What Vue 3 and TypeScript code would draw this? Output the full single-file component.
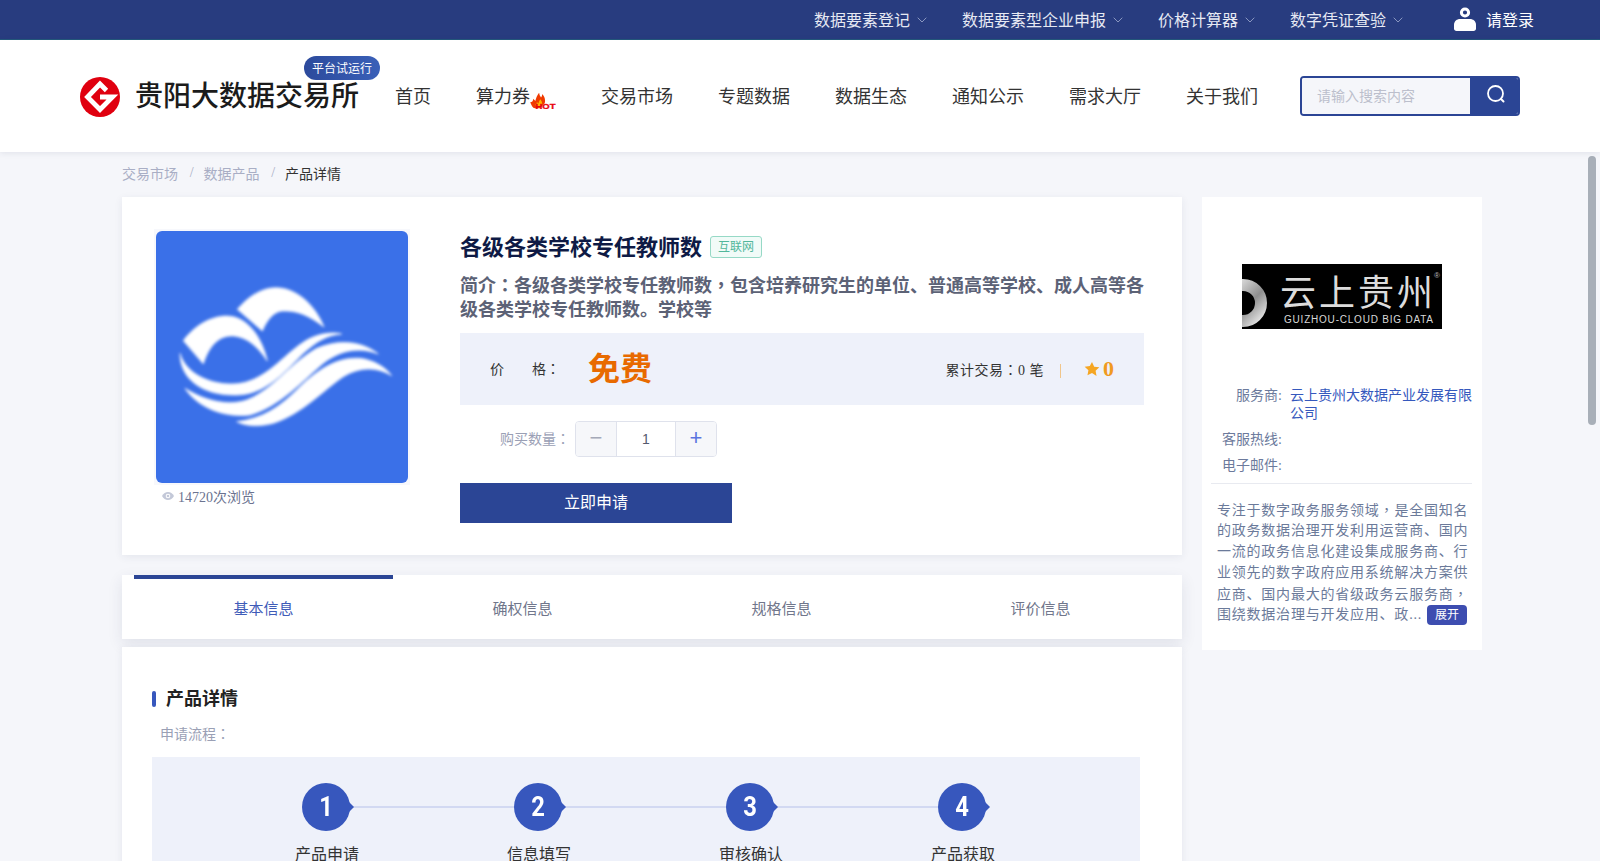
<script setup lang="ts">
const topLinks: string[] = ['数据要素登记', '数据要素型企业申报', '价格计算器', '数字凭证查验']
const tabs: string[] = ['基本信息', '确权信息', '规格信息', '评价信息']
const steps: string[] = ['产品申请', '信息填写', '审核确认', '产品获取']
</script>

<template>
  <div class="page">
    <div class="topbar">
      <div v-for="t in topLinks" :key="t" class="top-link">
        <span>{{ t }}</span>
        <svg class="chev" viewBox="0 0 10 6"><path d="M.7.7 5 5 9.3.7" fill="none" stroke="#8a97c0" stroke-width="1" /></svg>
      </div>
      <div class="login">
        <svg class="user" viewBox="0 0 22 24">
          <circle cx="11" cy="5.500" r="3.600" fill="none" stroke="#fff" stroke-width="3" />
          <path d="M0 18c0-4 3-6 6-6h10c3 0 6 2 6 6v3.500c0 1.500-1 2.500-2.500 2.500h-17C1 24 0 23 0 21.500z" fill="#fff" />
        </svg>
        <span>请登录</span>
      </div>
    </div>

    <header class="header">
      <div class="brand">
        <svg class="logo" viewBox="0 0 40 40">
          <circle cx="20" cy="20" r="20" fill="#e0000f" />
          <path d="M26.500 13.500 20 7 7.500 20 20 32.500 32.500 20H20" fill="none" stroke="#fff" stroke-width="4.800" />
        </svg>
        <span class="brand-name">贵阳大数据交易所</span>
        <span class="pill">平台试运行</span>
      </div>
      <nav class="nav">
        <a>首页</a>
        <a class="hot-link">算力券
          <svg class="hot" viewBox="0 0 27 16">
            <g transform="translate(0 -1.500) scale(1.200)">
              <path d="M1 9c1.500 0 2.500-1 2.500-3 .8 1 1.500 1 1.700 2C6 6 6 4 8.500 1c0 2 1 3 1.500 4 .8-1 1-2 1-3 2 2 3 5 2 8l-4 4H5C3 14 2 11 1 9z" fill="#f03a00" />
              <path d="M5 11c1 0 1.500-1 1.500-2 .8 0 1 1 1.500 1 0-1 .7-2.500 1.500-3.500 1 1.500 1.500 2.500 1.500 4.500l-2 2H7z" fill="#ffb400" />
            </g>
            <text x="6.500" y="15.500" class="hot-text" textLength="20" lengthAdjust="spacingAndGlyphs">HOT</text>
          </svg>
        </a>
        <a>交易市场</a>
        <a>专题数据</a>
        <a>数据生态</a>
        <a>通知公示</a>
        <a>需求大厅</a>
        <a>关于我们</a>
      </nav>
      <div class="search">
        <div class="search-input">请输入搜索内容</div>
        <div class="search-btn">
          <svg viewBox="0 0 20 20"><circle cx="9.500" cy="9.500" r="7.500" fill="none" stroke="#fff" stroke-width="1.800" /><path d="M15 15l2.500 2.500" stroke="#fff" stroke-width="2" stroke-linecap="round" /></svg>
        </div>
      </div>
    </header>

    <main class="content">
      <div class="crumbs">
        <span>交易市场</span><i>/</i><span>数据产品</span><i>/</i><b>产品详情</b>
      </div>
      <div class="columns">
        <div class="left">
          <section class="card product">
            <div class="pic-col">
              <div class="pic">
                <svg viewBox="78 63 756 756">
                  <defs><filter id="soft" x="-10%" y="-10%" width="120%" height="120%"><feGaussianBlur stdDeviation="5" /></filter></defs>
                  <rect x="78" y="63" width="756" height="756" fill="#3a70e8" />
                  <g fill="#fff" stroke="#fff" stroke-width="2" stroke-linejoin="round" filter="url(#soft)">
                    <path d="M160 392C190 350 240 318 290 318c60 0 105 60 122 135-30-45-60-70-100-75-45-4-75 30-92 84z" />
                    <path d="M322 298c30-35 70-65 115-65 65 0 120 55 145 118-45-35-80-50-125-48-25 2-45 25-60 60z" />
                    <path d="M150 430C170 500 260 530 330 520 420 505 470 420 540 385 570 370 610 365 635 372 590 375 560 395 520 430 460 490 400 560 310 555 220 555 150 510 150 430z" />
                    <path d="M165 535C220 570 290 590 350 570 430 540 480 460 560 415 630 385 700 395 745 432 690 410 630 420 580 460 520 510 450 590 360 615 280 625 200 590 165 535z" />
                    <path d="M320 635C400 625 450 590 500 540 560 480 620 440 690 445 730 450 765 470 785 497 740 470 690 470 640 500 580 540 520 610 430 640 390 650 350 650 320 635z" />
                  </g>
                </svg>
              </div>
              <div class="views">
                <svg viewBox="0 0 12 8"><path d="M0 4c1.500-2.500 3.500-4 6-4s4.500 1.500 6 4c-1.500 2.500-3.500 4-6 4S1.500 6.500 0 4z" fill="#c3c8d8" /><circle cx="6" cy="4" r="2.300" fill="#fff" /><circle cx="6" cy="4" r="1.300" fill="#c3c8d8" /></svg>
                <span>14720次浏览</span>
              </div>
            </div>
            <div class="info">
              <div class="title-row">
                <h1>各级各类学校专任教师数</h1>
                <span class="tag">互联网</span>
              </div>
              <p class="intro">简介<span class="pn">：</span>各级各类学校专任教师数<span class="pn">，</span>包含培养研究生的单位、普通高等学校、成人高等各级各类学校专任教师数。学校等</p>
              <div class="price">
                <span class="price-label">价</span>
                <span class="price-label second">格<span class="pn">：</span></span>
                <span class="free">免费</span>
                <span class="trade">累计交易<span class="pn">：</span>0 笔</span>
                <span class="sep"></span>
                <svg class="star" viewBox="0 0 24 24"><path d="M12 1.500l3.300 7 7.700 1-5.600 5.300 1.400 7.700L12 18l-6.800 3.500 1.400-7.700L1 8.500l7.700-1z" fill="#f5a623" /></svg>
                <span class="score">0</span>
              </div>
              <div class="qty">
                <span class="qty-label">购买数量<span class="pn">：</span></span>
                <div class="stepper">
                  <span class="step-btn minus">−</span>
                  <span class="step-val">1</span>
                  <span class="step-btn plus">+</span>
                </div>
              </div>
              <button class="apply">立即申请</button>
            </div>
          </section>

          <section class="card tabs">
            <div v-for="(t, i) in tabs" :key="t" class="tab" :class="{ active: i === 0 }">{{ t }}</div>
          </section>

          <section class="card detail">
            <h2>产品详情</h2>
            <div class="flow-label">申请流程<span class="pn">：</span></div>
            <div class="flow">
              <div v-for="(s, i) in steps" :key="s" class="flow-step" :class="{ last: i === steps.length - 1 }">
                <div class="num"><span class="digit">{{ i + 1 }}</span></div>
                <div class="step-name">{{ s }}</div>
              </div>
            </div>
          </section>
        </div>

        <aside class="side">
          <svg class="cloud" viewBox="0 0 200 65">
            <defs><linearGradient id="silver" x1="0" y1="0" x2="1" y2="1"><stop offset="0" stop-color="#f4f4f4" /><stop offset=".6" stop-color="#8e8e8e" /><stop offset="1" stop-color="#e6e6e6" /></linearGradient></defs>
            <rect width="200" height="65" fill="#000" />
            <circle cx="1" cy="39" r="18" fill="none" stroke="url(#silver)" stroke-width="12" />
            <text x="38" y="42" class="cloud-cn">云上贵州</text>
            <text x="42" y="59" class="cloud-en" textLength="149">GUIZHOU-CLOUD BIG DATA</text>
            <text x="192" y="14" class="cloud-r">®</text>
          </svg>
          <div class="meta first"><span class="meta-k">服务商:</span><span class="meta-v">云上贵州大数据产业发展有限公司</span></div>
          <div class="meta"><span class="meta-k">客服热线:</span></div>
          <div class="meta"><span class="meta-k">电子邮件:</span></div>
          <div class="rule"></div>
          <div class="desc">
            <div>专注于数字政务服务领域<span class="pn">，</span>是全国知名</div>
            <div>的政务数据治理开发利用运营商、国内</div>
            <div>一流的政务信息化建设集成服务商、行</div>
            <div>业领先的数字政府应用系统解决方案供</div>
            <div>应商、国内最大的省级政务云服务商<span class="pn">，</span></div>
            <div class="desc-last"><span>围绕数据治理与开发应用、政...</span><span class="more">展开</span></div>
          </div>
        </aside>
      </div>
    </main>

    <div class="thumb"></div>
  </div>
</template>

<style>
html, body { margin: 0; overflow: hidden; background: #f5f6fa; }
</style>

<style scoped>
.page {
  position: relative;
  height: 861px;
  overflow: hidden;
  background: #f5f6fa;
  font-family: "Liberation Serif", "Noto Sans CJK SC", serif;
  color: #333;
}
.pn { font-family: "Noto Sans CJK TC", sans-serif; }
.topbar {
  height: 37px;
  padding-bottom: 2px;
  border-bottom: 1px solid #24597c;
  background: #283c7f;
  display: flex;
  align-items: center;
  justify-content: flex-end;
  padding-right: 66px;
  color: #e6e9f3;
  font-size: 16px;
}
.top-link { display: flex; align-items: center; margin-right: 35px; }
.top-link:nth-child(4) { margin-right: 51px; }
.chev { width: 10px; height: 6px; margin: 2px 0 0 7px; }
.login { display: flex; align-items: center; color: #fff; }
.user { width: 22px; height: 24px; margin-right: 10px; }
.header {
  position: relative;
  z-index: 1;
  height: 112px;
  background: #fff;
  box-shadow: 0 1px 6px rgba(40, 50, 90, .1);
  display: flex;
  align-items: center;
  padding-left: 80px;
}
.brand { position: relative; display: flex; align-items: center; }
.logo { width: 40px; height: 40px; margin-top: 2px; }
.brand-name {
  margin-left: 15px;
  padding-top: 2px;
  font-family: "Liberation Sans", "Noto Sans CJK SC", sans-serif;
  font-size: 28px;
  font-weight: 500;
  color: #1b1b1b;
  line-height: 40px;
}
.pill {
  position: absolute;
  left: 224px;
  top: -19px;
  width: 76px;
  height: 24px;
  border-radius: 12px;
  background: linear-gradient(90deg, #2c4a9c, #3a60b8);
  color: #fff;
  font-size: 12px;
  line-height: 27px;
  text-align: center;
}
.nav { display: flex; margin-left: 36px; font-size: 18px; color: #333; gap: 45px; padding-bottom: 2px; }
.hot-link { display: flex; align-items: center; }
.hot { width: 27px; height: 16px; margin-top: 11px; margin-left: -1px; }
.hot-text { font: 900 8px "Liberation Sans", sans-serif; fill: #e8000b; stroke: #e8000b; stroke-width: .3px; }
.search {
  margin-left: 42px;
  width: 220px;
  height: 40px;
  box-sizing: border-box;
  border: 2px solid #2b4595;
  border-radius: 4px;
  display: flex;
  overflow: hidden;
}
.search-input {
  flex: 1;
  background: #f5f6fa;
  padding-left: 15px;
  color: #bcbfcc;
  font-size: 14px;
  line-height: 38px;
}
.search-btn { width: 48px; background: #2b4595; display: flex; align-items: center; justify-content: center; padding: 0 0 4px 3px; box-sizing: border-box; }
.search-btn svg { width: 20px; height: 20px; }

.content { padding-left: 122px; }
.crumbs { height: 45px; padding-bottom: 3px; box-sizing: border-box; display: flex; align-items: center; font-size: 14px; color: #a9aec5; }
.crumbs i { font-style: normal; width: 25.500px; text-align: center; text-indent: 2px; color: #a9aec5; }
.crumbs b { font-weight: 400; color: #333; }
.columns { display: flex; align-items: flex-start; gap: 20px; }
.left { width: 1060px; }
.card { background: #fff; box-shadow: 0 2px 8px rgba(40, 50, 90, .08); }
.product { display: flex; padding: 32px; box-sizing: border-box; height: 358px; }
.pic-col { width: 256px; margin-right: 50px; }
.pic { width: 256px; height: 256px; box-sizing: border-box; padding: 2px; background: #f7f8fc; }
.pic svg { display: block; width: 252px; height: 252px; border-radius: 6px; }
.views { display: flex; align-items: center; height: 22px; padding-left: 8px; font-size: 14px; color: #6b7390; }
.views svg { width: 12px; height: 8px; margin-right: 4px; }
.info { width: 684px; }
.title-row { display: flex; align-items: center; height: 36px; }
h1 { margin: -4px 0 0; font-size: 22px; font-weight: 700; color: #0e1a45; }
.tag {
  margin-left: 8px;
  width: 52px;
  height: 22px;
  box-sizing: border-box;
  border: 1px solid #96d9c6;
  border-radius: 3px;
  background: #f1fbf8;
  color: #52b79b;
  font-size: 12px;
  line-height: 20px;
  text-align: center;
}
.intro { margin: 7px 0 0; height: 49px; font-size: 18px; line-height: 24px; font-weight: 700; color: #5c6276; }
.price {
  margin-top: 12px;
  height: 72px;
  background: #eef1fa;
  display: flex;
  align-items: center;
  padding-left: 30px;
  font-size: 14px;
  color: #333;
}
.price-label { padding-bottom: 2px; }
.price-label.second { margin-left: 28px; }
.free { margin-left: 28px; padding-bottom: 6px; font-size: 32px; font-weight: 700; color: #e86a00; }
.trade { margin-left: auto; letter-spacing: .5px; }
.sep { width: 1px; height: 14px; background: #f0c58a; margin: 4px 23px 0 16px; }
.star { width: 16px; height: 16px; margin-right: 3px; }
.score { font-size: 22px; font-weight: 700; color: #f09a20; margin-right: 30px; line-height: 22px; }
.qty { margin-top: 16px; display: flex; align-items: center; padding-left: 40px; }
.qty-label { width: 75px; padding-bottom: 2px; font-size: 14px; color: #9aa0b5; }
.stepper {
  width: 142px;
  height: 36px;
  box-sizing: border-box;
  border: 1px solid #dfe2ec;
  border-radius: 4px;
  display: flex;
  overflow: hidden;
}
.step-btn {
  width: 40px;
  background: #f6f7fa;
  text-align: center;
  font-family: "Liberation Sans", sans-serif;
  font-size: 22px;
  line-height: 31px;
}
.minus { color: #a5a9b8; border-right: 1px solid #dfe2ec; }
.plus { color: #5b74e0; border-left: 1px solid #dfe2ec; }
.step-val { flex: 1; text-align: center; font-family: "Liberation Sans", sans-serif; font-size: 14px; line-height: 34px; color: #555a6e; }
.apply {
  display: block;
  margin-top: 26px;
  padding: 0 0 4px;
  width: 272px;
  height: 40px;
  border: 0;
  background: #2b4595;
  color: #fff;
  font-family: inherit;
  font-size: 16px;
}
.tabs { margin-top: 20px; height: 64px; padding-left: 12px; display: flex; box-shadow: 0 5px 14px rgba(40, 50, 90, .1); }
.tab {
  width: 259px;
  box-sizing: border-box;
  border-top: 4px solid transparent;
  text-align: center;
  font-size: 15px;
  line-height: 61px;
  color: #70768b;
}
.tab.active { border-top-color: #2b4595; color: #3f5cb8; }
.detail { margin-top: 8px; height: 300px; padding: 39px 0 0 30px; box-sizing: border-box; }
h2 {
  margin: 0;
  font-size: 18px;
  font-weight: 700;
  line-height: 26px;
  color: #222;
  display: flex;
  align-items: center;
}
h2::before { content: ""; width: 4px; height: 16px; margin-right: 10px; border-radius: 2px; background: #3757bd; }
.flow-label { margin-top: 11px; height: 20px; padding-left: 8px; font-size: 14px; line-height: 20px; color: #9aa0b5; }
.flow { margin-top: 14px; width: 988px; height: 200px; background: #eef1fa; display: flex; padding: 26px 0 0 68px; box-sizing: border-box; }
.flow-step { position: relative; width: 212px; display: flex; flex-direction: column; align-items: center; }
.flow-step:not(.last)::after {
  content: "";
  position: absolute;
  left: 106px;
  top: 23px;
  width: 212px;
  height: 2px;
  background: #d2d9f2;
}
.num {
  position: relative;
  z-index: 1;
  width: 48px;
  height: 48px;
  border-radius: 50%;
  background: #3757bd;
  color: #fff;
  font-family: Roboto, sans-serif;
  font-size: 28px;
  font-weight: 700;
  line-height: 48px;
  text-align: center;
}
.digit { display: inline-block; transform: scaleX(.85); }
.num::after {
  content: "";
  position: absolute;
  right: -4px;
  top: 19px;
  width: 0;
  height: 0;
  border-left: 5px solid #3757bd;
  border-top: 5px solid transparent;
  border-bottom: 5px solid transparent;
}
.step-name { margin: 12px 0 0 2px; font-size: 16px; line-height: 24px; color: #333; }

.side { width: 280px; height: 453px; box-sizing: border-box; padding-top: 67px; background: #fff; }
.cloud { display: block; width: 200px; height: 65px; margin: 0 auto 58px; }
.cloud-cn { font: 400 36px "Noto Sans CJK SC", sans-serif; fill: #dcdcdc; letter-spacing: 3px; }
.cloud-en { font: 400 10px "Liberation Sans", sans-serif; fill: #d8d8d8; }
.cloud-r { font: 400 8px "Liberation Sans", sans-serif; fill: #bbb; }
.meta { display: flex; font-size: 14px; line-height: 18px; margin-top: 8px; padding-right: 5px; }
.meta.first { margin-top: 0; }
.meta-k { width: 80px; flex: none; text-align: right; color: #6c7a9c; }
.meta-v { margin-left: 8px; color: #3558bd; }
.rule { height: 1px; background: #e8eaf0; margin: 8px 10px 0 9px; }
.desc { margin-top: 15px; padding-left: 15px; font-size: 14px; line-height: 21px; letter-spacing: .78px; color: #6b7a9a; white-space: nowrap; }
.desc > div { height: 21px; }
.desc-last { display: flex; align-items: center; }
.more {
  margin-left: auto;
  margin-right: 15px;
  width: 40px;
  height: 20px;
  border-radius: 4px;
  background: #3d4db0;
  color: #fff;
  font-size: 12px;
  line-height: 20px;
  letter-spacing: 0;
  text-align: center;
}
.thumb { position: absolute; left: 1588px; top: 156px; width: 8px; height: 269px; border-radius: 4px; background: #a8afb8; }
</style>
